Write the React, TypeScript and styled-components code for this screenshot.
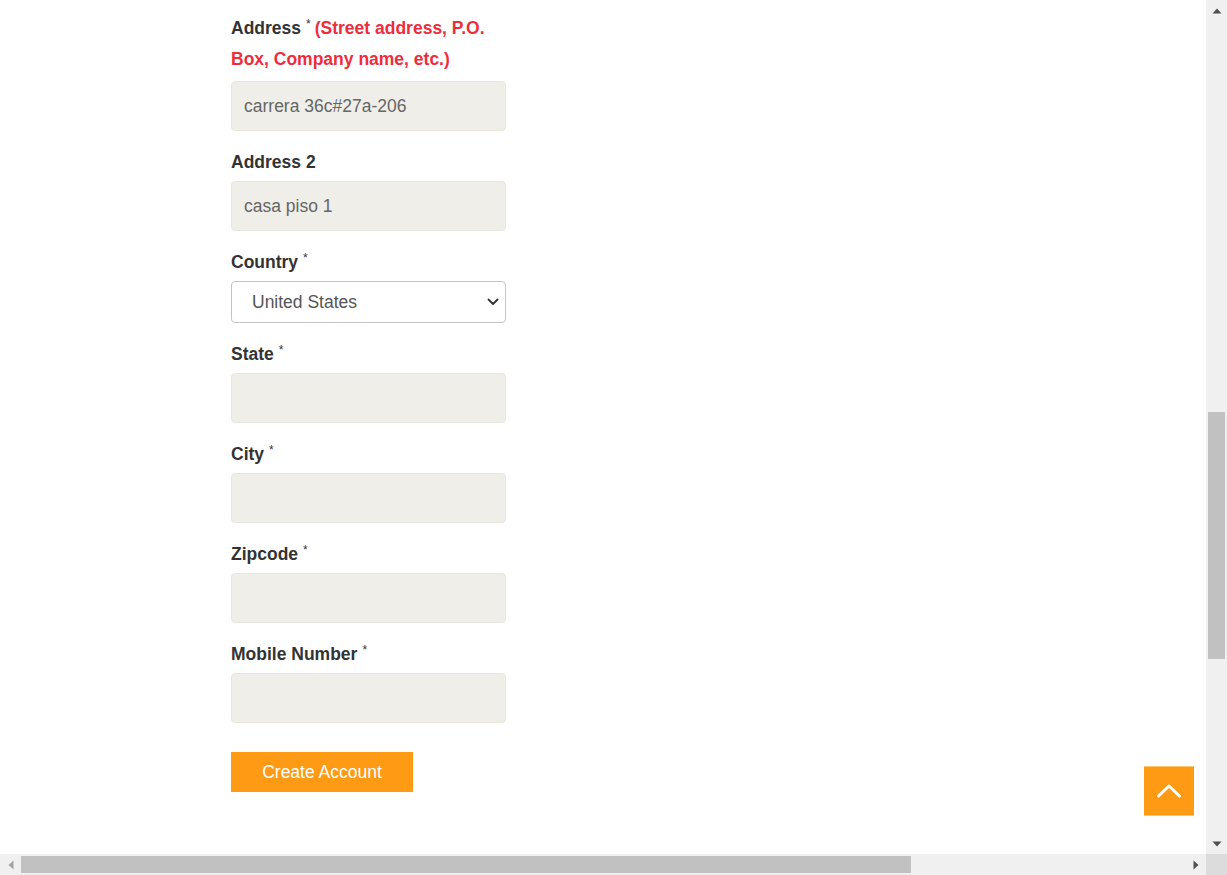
import React from "react";
import styled, { createGlobalStyle } from "styled-components";

const Global = createGlobalStyle`
  html, body { margin: 0; padding: 0; height: 100%; overflow: hidden; }
  body { font-family: "Liberation Sans", Arial, sans-serif; background: #fff; }
  #root { height: 100%; }
`;

const Viewport = styled.div`
  width: 1227px;
  height: 875px;
  display: grid;
  grid-template-columns: 1fr 21px;
  grid-template-rows: 1fr 21px;
`;

const Main = styled.main`
  position: relative;
  overflow: hidden;
  padding: 13px 0 0 231px;
`;

const Form = styled.form`
  width: 275px;
  display: flex;
  flex-direction: column;
`;

const Group = styled.div`
  display: flex;
  flex-direction: column;
  margin-bottom: 16px;
`;

const Label = styled.label<{ $mb?: number }>`
  font-size: 17.5px;
  font-weight: 700;
  line-height: 31px;
  color: #333;
  margin-bottom: ${(p) => p.$mb ?? 3}px;
`;

const LabelText = styled.span`
  color: #333;
`;

const Req = styled.span`
  display: inline-block;
  font-size: 12px;
  font-weight: 400;
  color: #333;
  line-height: 12px;
  vertical-align: top;
  margin: 5px 4px 0 5px;
`;

const Hint = styled.span`
  color: #ee2d3c;
`;

const Input = styled.input`
  box-sizing: border-box;
  width: 275px;
  height: 50px;
  padding: 0 12px;
  border: 1px solid #e7e6df;
  border-radius: 4px;
  background: #efeee8;
  font-family: "Liberation Sans", Arial, sans-serif;
  font-size: 17.5px;
  color: #666;
  outline: none;
`;

const SelectWrap = styled.div`
  position: relative;
  width: 275px;
  height: 42px;
`;

const Select = styled.select`
  box-sizing: border-box;
  width: 100%;
  height: 100%;
  appearance: none;
  -webkit-appearance: none;
  padding: 0 30px 0 20px;
  border: 1px solid #c4c4c4;
  border-radius: 4px;
  background: #fff;
  font-family: "Liberation Sans", Arial, sans-serif;
  font-size: 17.5px;
  color: #555;
  outline: none;
`;

const Chevron = styled.svg`
  position: absolute;
  right: 7px;
  top: 17px;
  pointer-events: none;
`;

const Submit = styled.button`
  margin-top: 13px;
  width: 182px;
  height: 40px;
  border: none;
  border-radius: 0;
  background: #ff9a14;
  color: #fff;
  font-family: "Liberation Sans", Arial, sans-serif;
  font-size: 17.5px;
  padding: 0;
  cursor: pointer;
`;

const BackToTop = styled.button`
  position: absolute;
  right: 12px;
  bottom: 38px;
  width: 50px;
  height: 50px;
  border: none;
  border-top: 1px solid #ffc46e;
  border-bottom: 1px solid #ffc46e;
  background: #ff9a14;
  display: flex;
  align-items: center;
  justify-content: center;
  padding: 0;
`;

const VTrack = styled.div`
  background: #f0f0f0;
  display: grid;
  grid-template-rows: 21px 1fr 21px;
  justify-items: center;
  align-items: center;
`;

const VThumbArea = styled.div`
  align-self: stretch;
  width: 100%;
  display: flex;
  flex-direction: column;
  padding-top: 391px;
  box-sizing: border-box;
`;

const VThumb = styled.div`
  width: 17px;
  height: 247px;
  margin: 0 auto;
  background: #c1c1c1;
`;

const HTrack = styled.div`
  background: #f0f0f0;
  display: grid;
  grid-template-columns: 21px 1fr 21px;
  align-items: center;
  justify-items: center;
`;

const HThumbArea = styled.div`
  justify-self: stretch;
  height: 100%;
  display: flex;
  align-items: center;
`;

const HThumb = styled.div`
  width: 890px;
  height: 17px;
  background: #c1c1c1;
`;

const Corner = styled.div`
  background: #dcdcdc;
`;

const Arrow = ({ dir, color = "#505050" }: { dir: "up" | "down" | "left" | "right"; color?: string }) => {
  const pts = {
    up: "0.5,5.5 9.5,5.5 5,0.5",
    down: "0.5,0.5 9.5,0.5 5,5.5",
    left: "5.5,0.5 5.5,9.5 0.5,5",
    right: "0.5,0.5 0.5,9.5 5.5,5",
  }[dir];
  const vertical = dir === "up" || dir === "down";
  return (
    <svg width={vertical ? 10 : 6} height={vertical ? 6 : 10} viewBox={vertical ? "0 0 10 6" : "0 0 6 10"}>
      <polygon points={pts} fill={color} />
    </svg>
  );
};

const fields: { label: string; value?: string; select?: boolean; req: boolean }[] = [
  { label: "Address 2", value: "casa piso 1", req: false },
  { label: "Country", select: true, req: true },
  { label: "State", req: true },
  { label: "City", req: true },
  { label: "Zipcode", req: true },
  { label: "Mobile Number", req: true },
];

export default function App() {
  return (
    <>
      <Global />
      <Viewport>
        <Main>
          <Form onSubmit={(e) => e.preventDefault()}>
            <Group>
              <Label $mb={6}>
                <LabelText>Address</LabelText>
                <Req>*</Req>
                <Hint>(Street address, P.O. Box, Company name, etc.)</Hint>
              </Label>
              <Input defaultValue="carrera 36c#27a-206" />
            </Group>
            {fields.map((f) => (
              <Group key={f.label}>
                <Label>
                  <LabelText>{f.label}</LabelText>
                  {f.req && <Req>*</Req>}
                </Label>
                {f.select ? (
                  <SelectWrap>
                    <Select defaultValue="US">
                      <option value="US">United States</option>
                      <option value="CO">Colombia</option>
                    </Select>
                    <Chevron width="12" height="8" viewBox="0 0 12 8">
                      <path d="M1.5 1.5 L6 6 L10.5 1.5" fill="none" stroke="#333" strokeWidth="1.8" strokeLinecap="round" strokeLinejoin="round" />
                    </Chevron>
                  </SelectWrap>
                ) : (
                  <Input defaultValue={f.value ?? ""} />
                )}
              </Group>
            ))}
            <Submit type="submit">Create Account</Submit>
          </Form>
          <BackToTop aria-label="Back to top">
            <svg width="26" height="16" viewBox="0 0 26 16">
              <path d="M2.5 13 L13 3 L23.5 13" fill="none" stroke="#fff" strokeWidth="3" strokeLinecap="round" strokeLinejoin="round" />
            </svg>
          </BackToTop>
        </Main>
        <VTrack>
          <Arrow dir="up" />
          <VThumbArea>
            <VThumb />
          </VThumbArea>
          <Arrow dir="down" />
        </VTrack>
        <HTrack>
          <Arrow dir="left" color="#a3a3a3" />
          <HThumbArea>
            <HThumb />
          </HThumbArea>
          <Arrow dir="right" />
        </HTrack>
        <Corner />
      </Viewport>
    </>
  );
}
